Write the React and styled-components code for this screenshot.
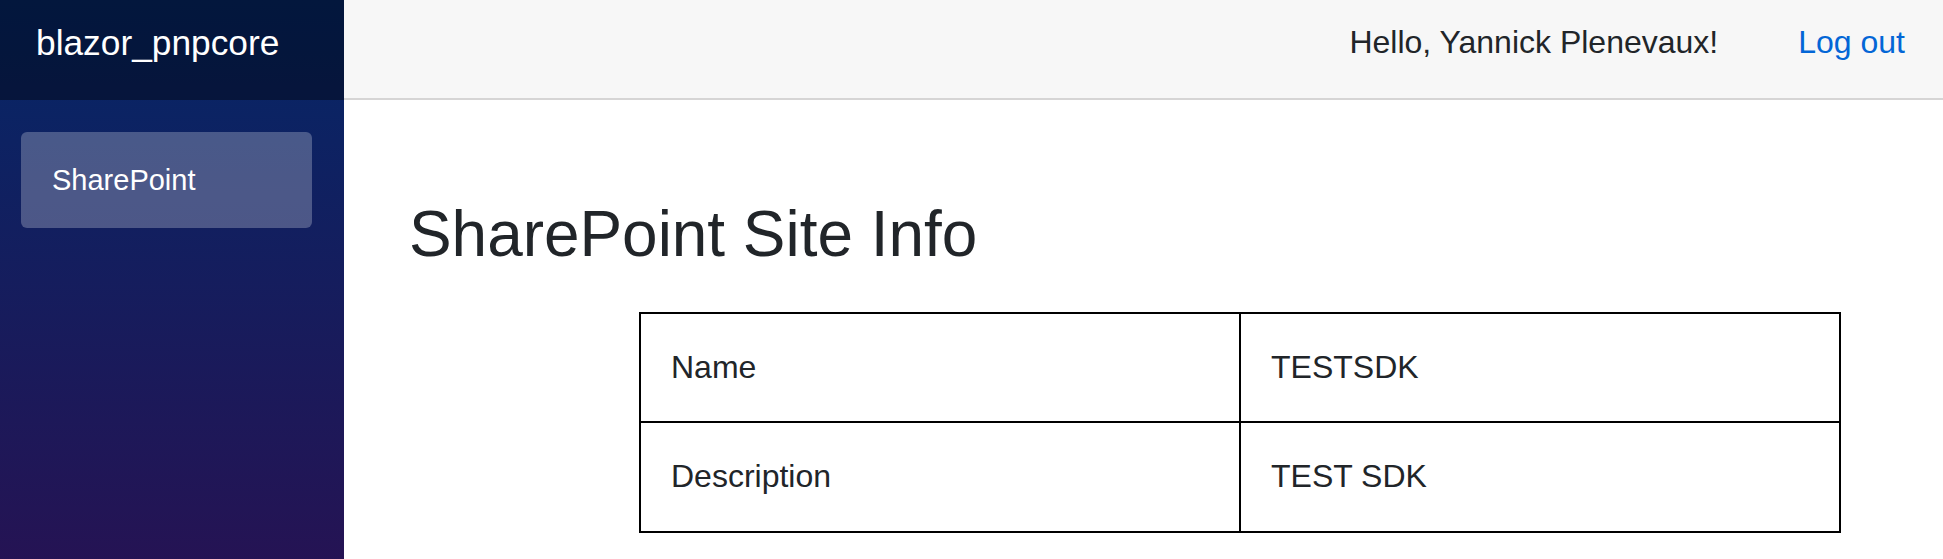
import React from "react";
import styled, { createGlobalStyle } from "styled-components";

const GlobalStyle = createGlobalStyle`
  html, body {
    margin: 0;
    padding: 0;
    height: 100%;
  }
  body {
    font-family: "Liberation Sans", Arial, sans-serif;
    color: #212529;
    background: #fff;
  }
  #root {
    height: 100%;
  }
`;

const Page = styled.div`
  display: flex;
  min-height: 100vh;
`;

const Sidebar = styled.div`
  width: 344px;
  flex-shrink: 0;
  background-image: linear-gradient(180deg, rgb(5, 39, 103) 0px, #3a0647 930px);
`;

const Brand = styled.div`
  box-sizing: border-box;
  height: 100px;
  display: flex;
  align-items: center;
  padding: 0 0 14px 36px;
  background-color: rgba(0, 0, 0, 0.4);
  color: #fff;
  font-size: 35.3px;
`;

const Nav = styled.nav`
  padding: 32px 32px 0 21px;
`;

const NavLink = styled.a`
  display: flex;
  align-items: center;
  height: 96px;
  padding-left: 31px;
  border-radius: 6px;
  background-color: ${(p) => (p.active ? "rgba(255, 255, 255, 0.25)" : "transparent")};
  color: #fff;
  font-size: 29px;
  text-decoration: none;
`;

const Main = styled.main`
  flex: 1;
  display: flex;
  flex-direction: column;
`;

const TopRow = styled.div`
  box-sizing: border-box;
  height: 100px;
  display: flex;
  justify-content: flex-end;
  align-items: center;
  padding: 0 38px 13px 0;
  background-color: #f7f7f7;
  border-bottom: 2px solid #d6d5d5;
  font-size: 32px;
`;

const Greeting = styled.span`
  color: #212529;
`;

const LogOut = styled.a`
  margin-left: 80px;
  color: #0366d6;
  text-decoration: none;
`;

const Content = styled.div`
  padding: 96px 65px 0 65px;
`;

const Titulo = styled.h1`
  margin: 0 0 40px 0;
  font-size: 63.9px;
  font-weight: 400;
  line-height: 76.2px;
  color: #212529;
`;

const InfoTable = styled.table`
  margin-left: 230px;
  width: 1202px;
  border-collapse: collapse;
  font-size: 32px;
  line-height: 47.25px;
`;

const Cell = styled.td`
  width: 50%;
  padding: 30px;
  border: 2px solid #000;
  color: #212529;
`;

const info = [
  { label: "Name", value: "TESTSDK" },
  { label: "Description", value: "TEST SDK" },
];

const App = () => {
  return (
    <>
      <GlobalStyle />
      <Page>
        <Sidebar>
          <Brand>blazor_pnpcore</Brand>
          <Nav>
            <NavLink href="#" active>
              SharePoint
            </NavLink>
          </Nav>
        </Sidebar>
        <Main>
          <TopRow>
            <Greeting>Hello, Yannick Plenevaux!</Greeting>
            <LogOut href="#">Log out</LogOut>
          </TopRow>
          <Content>
            <Titulo>SharePoint Site Info</Titulo>
            <InfoTable>
              <tbody>
                {info.map((row) => (
                  <tr key={row.label}>
                    <Cell>{row.label}</Cell>
                    <Cell>{row.value}</Cell>
                  </tr>
                ))}
              </tbody>
            </InfoTable>
          </Content>
        </Main>
      </Page>
    </>
  );
};

export default App;
